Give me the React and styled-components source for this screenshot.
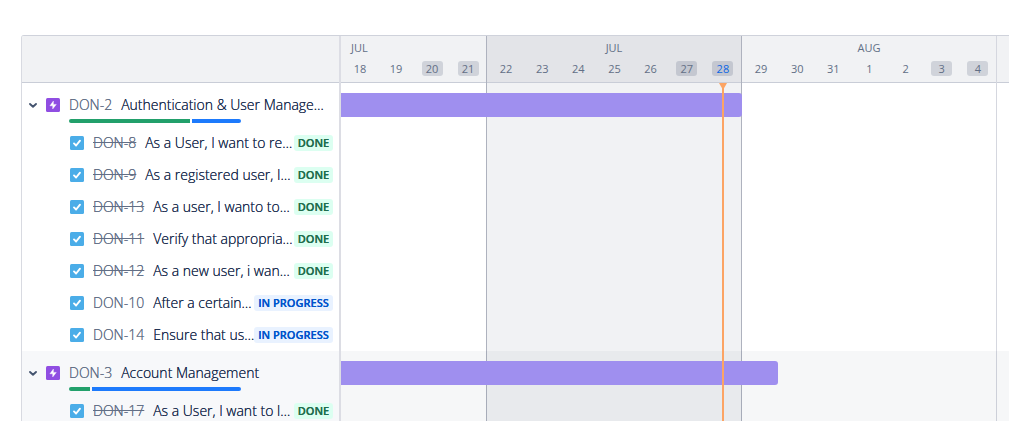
import React from 'react';
import styled, { createGlobalStyle } from 'styled-components';

const GlobalStyle = createGlobalStyle`
  * { box-sizing: border-box; }
  body {
    margin: 0;
    background: #ffffff;
    color: #172b4d;
    font-family: "Open Sans", "Noto Sans", sans-serif;
    font-size: 14px;
  }
  button { font: inherit; }
`;

const Page = styled.main`
  height: 100vh;
  overflow: hidden;
  padding: 35px 0 0 21px;
`;

const Board = styled.div`
  display: flex;
  align-items: stretch;
  min-height: 100%;
  border-top: 1px solid #cfd2db;
  border-left: 1px solid #d8dae1;
  border-top-left-radius: 3px;
  overflow: hidden;
`;

const Sidebar = styled.section`
  flex: 0 0 319px;
  width: 319px;
  border-right: 2px solid #dcdde4;
`;

const SidebarHeader = styled.div`
  height: 47px;
  background: #f1f2f4;
  border-bottom: 1px solid #c9cdd7;
`;

const EpicGroup = styled.div`
  background: ${(p) => (p.$shaded ? '#f7f8fa' : '#ffffff')};
`;

const EpicRow = styled.div`
  height: 44px;
  padding: 10px 6px 0 5px;
`;

const EpicLine = styled.div`
  display: flex;
  align-items: center;
  height: 24px;
  white-space: nowrap;
`;

const Toggle = styled.button`
  display: flex;
  align-items: center;
  justify-content: center;
  width: 12px;
  height: 16px;
  padding: 0;
  margin-right: 7px;
  border: 0;
  background: none;
  color: #44546f;
`;

const Icon = styled.svg`
  display: block;
  flex: none;
  width: 14px;
  height: 14px;
  margin-right: 9px;
`;

const Key = styled.a`
  flex: none;
  margin-right: 9px;
  color: #626f86;
  font-weight: 300;
  line-height: 18px;
  text-shadow: 0 0 currentColor;
  text-decoration: ${(p) => (p.$done ? 'line-through' : 'none')};
`;

const Title = styled.span`
  flex: 1 1 0;
  min-width: 0;
  font-weight: 300;
  line-height: 18px;
  text-shadow: 0 0 currentColor;
  white-space: nowrap;
`;

const Progress = styled.div`
  display: flex;
  gap: 2px;
  width: 172px;
  height: 4px;
  margin: 2px 0 0 42px;
  border-radius: 2px;
  overflow: hidden;
`;

const Segment = styled.div`
  flex: ${(p) => p.$share} 1 0;
  background: ${(p) => (p.$done ? '#22a06b' : '#1d7afc')};
`;

const IssueRow = styled.div`
  display: flex;
  align-items: center;
  height: 32px;
  padding: 0 6px 0 48px;
`;

const Lozenge = styled.span`
  flex: none;
  width: ${(p) => (p.$progress ? '79px' : '39px')};
  height: 16px;
  border-radius: 3px;
  background: ${(p) => (p.$progress ? '#e9f2ff' : '#dcfff1')};
  color: ${(p) => (p.$progress ? '#0055cc' : '#216e4e')};
  font-size: 11px;
  font-weight: 600;
  line-height: 16px;
  text-align: center;
  text-shadow: 0 0 currentColor;
  white-space: nowrap;
`;

const Timeline = styled.section`
  position: relative;
  display: flex;
  flex: 1;
  min-width: 0;
  overflow: hidden;
`;

const Week = styled.div`
  flex: ${(p) => (p.$width ? `0 0 ${p.$width}px` : '1 0 0')};
  border-right: ${(p) => (p.$line ? `1px solid ${p.$line}` : '0')};
  background: ${(p) => (p.$current ? '#f1f2f4' : '#ffffff')};
`;

const WeekHeader = styled.div`
  height: 47px;
  padding-top: 4px;
  border-bottom: 1px solid #c9cdd7;
  background: ${(p) => (p.$current ? '#e3e4e8' : '#f1f2f4')};
  color: #626f86;
  font-size: 11px;
`;

const Month = styled.div`
  height: 16px;
  padding: 0 10px;
  line-height: 16px;
  text-align: ${(p) => (p.$start ? 'left' : 'center')};
`;

const Days = styled.div`
  display: flex;
  padding: 5px 0 0 1px;
`;

const Day = styled.div`
  display: flex;
  flex: 1 1 0;
  justify-content: center;
`;

const DayChip = styled.span`
  width: 21px;
  height: 15px;
  border-radius: 3px;
  line-height: 15px;
  text-align: center;
  background: ${(p) => (p.$off ? 'rgba(9, 30, 66, 0.14)' : 'transparent')};
  color: ${(p) => (p.$today ? '#0c66e4' : '#626f86')};
`;

const Lanes = styled.div`
  position: absolute;
  inset: 47px 0 0 0;
`;

const Lane = styled.div`
  height: ${(p) => 44 + p.$rows * 32}px;
  padding-top: 10px;
  background: ${(p) => (p.$shaded ? 'rgba(9, 30, 66, 0.035)' : 'transparent')};
`;

const Bar = styled.div`
  width: ${(p) => p.$length}px;
  height: 24px;
  border-radius: 0 3px 3px 0;
  background: #9f8fef;
`;

const Today = styled.div`
  position: absolute;
  top: 47px;
  bottom: 0;
  left: 381px;
  width: 2px;
  background: #fca464;
  &::before {
    content: '';
    position: absolute;
    top: 0;
    left: -3px;
    border: 4px solid transparent;
    border-top: 7px solid #fca464;
    border-bottom: 0;
  }
`;

const epics = [
  {
    key: 'DON-2', title: 'Authentication & User Manage…', done: 121, open: 49, length: 401,
    issues: [
      ['DON-8', 'As a User, I want to re…', true],
      ['DON-9', 'As a registered user, I…', true],
      ['DON-13', 'As a user, I wanto to…', true],
      ['DON-11', 'Verify that appropria…', true],
      ['DON-12', 'As a new user, i wan…', true],
      ['DON-10', 'After a certain…', false],
      ['DON-14', 'Ensure that us…', false],
    ],
  },
  {
    key: 'DON-3', title: 'Account Management', done: 21, open: 149, length: 437, shaded: true,
    issues: [['DON-17', 'As a User, I want to l…', true]],
  },
];

const weeks = [
  { month: 'JUL', days: [18, 19, 20, 21], off: [20, 21], width: 146, line: '#aeb2be', start: true },
  { month: 'JUL', days: [22, 23, 24, 25, 26, 27, 28], off: [27, 28], width: 255, line: '#aeb2be', current: true },
  { month: 'AUG', days: [29, 30, 31, 1, 2, 3, 4], off: [3, 4], width: 255, line: '#d5d7df' },
  { month: '', days: [], off: [] },
];

const Chevron = () => (
  <svg width="10" height="8" viewBox="0 0 10 8" fill="none" aria-hidden="true">
    <path d="M2 3 5 5.8 8 3" stroke="currentColor" strokeWidth="1.9" strokeLinecap="round" strokeLinejoin="round" />
  </svg>
);

const EpicIcon = () => (
  <Icon viewBox="0 0 14 14" aria-hidden="true">
    <rect width="14" height="14" rx="1.5" fill="#904ee2" />
    <path d="M7.4 3v3.4h2.9L6.7 11V7.8H3.9z" fill="#fff" stroke="#fff" strokeWidth="0.4" strokeLinejoin="round" />
  </Icon>
);

const TaskIcon = () => (
  <Icon viewBox="0 0 14 14" aria-hidden="true">
    <rect width="14" height="14" rx="1.5" fill="#4bade8" />
    <path d="M4 7.4 6.1 9.5 10 4.7" fill="none" stroke="#fff" strokeWidth="1.9" strokeLinecap="round" strokeLinejoin="round" />
  </Icon>
);

export default function App() {
  return (
    <>
      <GlobalStyle />
      <Page>
        <Board>
          <Sidebar>
            <SidebarHeader />
            {epics.map((epic) => (
              <EpicGroup key={epic.key} $shaded={epic.shaded}>
                <EpicRow>
                  <EpicLine>
                    <Toggle type="button" aria-expanded="true" aria-label={`Collapse ${epic.key}`}><Chevron /></Toggle>
                    <EpicIcon />
                    <Key href="#">{epic.key}</Key>
                    <Title>{epic.title}</Title>
                  </EpicLine>
                  <Progress>
                    <Segment $share={epic.done} $done />
                    <Segment $share={epic.open} />
                  </Progress>
                </EpicRow>
                {epic.issues.map(([key, title, done]) => (
                  <IssueRow key={key}>
                    <TaskIcon />
                    <Key href="#" $done={done}>{key}</Key>
                    <Title>{title}</Title>
                    <Lozenge $progress={!done}>{done ? 'DONE' : 'IN PROGRESS'}</Lozenge>
                  </IssueRow>
                ))}
              </EpicGroup>
            ))}
          </Sidebar>
          <Timeline>
            {weeks.map((week, i) => (
              <Week key={i} $width={week.width} $line={week.line} $current={week.current}>
                <WeekHeader $current={week.current}>
                  <Month $start={week.start}>{week.month}</Month>
                  <Days>
                    {week.days.map((day) => (
                      <Day key={day}>
                        <DayChip $off={week.off.includes(day)} $today={day === 28}>{day}</DayChip>
                      </Day>
                    ))}
                  </Days>
                </WeekHeader>
              </Week>
            ))}
            <Lanes>
              {epics.map((epic) => (
                <Lane key={epic.key} $rows={epic.issues.length} $shaded={epic.shaded}>
                  <Bar $length={epic.length} />
                </Lane>
              ))}
            </Lanes>
            <Today />
          </Timeline>
        </Board>
      </Page>
    </>
  );
}
